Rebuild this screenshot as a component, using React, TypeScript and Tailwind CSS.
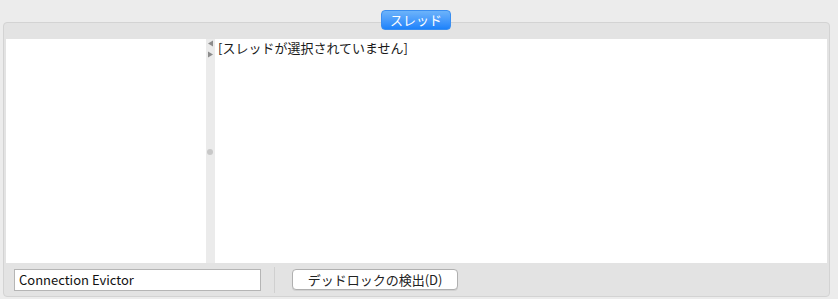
import React from "react";

export default function App() {
  const font = { fontFamily: '"Lucida Grande", "Noto Sans CJK JP", "Liberation Sans", sans-serif' };
  return (
    <div className="w-[838px] h-[299px] bg-[#ececec] relative overflow-hidden" style={font}>
      <div className="pt-[22px] pl-[3px] pr-[8px] h-full">
        <div className="h-[275px] w-[827px] bg-[#e3e3e3] border border-[#d3d3d3] rounded-[4px] flex flex-col">
          <div className="h-[16px]" />
          <div className="flex h-[224px] mx-[2px]">
            <div className="w-[200px] bg-white" />
            <div className="w-[9px] bg-[#ebebeb] flex flex-col items-center relative">
              <svg width="7" height="19" viewBox="0 0 7 19" className="mt-[1px]">
                <path d="M6 0.5 L1 3.5 L6 6.5 Z" fill="#8c8c8c" />
                <path d="M1 11.5 L6 14.5 L1 17.5 Z" fill="#8c8c8c" />
              </svg>
              <div className="absolute top-[110px] left-[1px] w-[6px] h-[6px] rounded-full bg-[#c8c8c8]" />
            </div>
            <div className="flex-1 bg-white pl-[3px] pt-[1px]">
              <div className="text-[13px] leading-[16px] text-[#1a1a1a]">[スレッドが選択されていません]</div>
            </div>
          </div>
          <div className="flex items-center h-[33px]">
            <div className="ml-[10px] w-[247px] h-[22px] bg-white border border-[#b5b5b5] flex items-center px-[4px] text-[13px] text-[#111]">
              Connection Evictor
            </div>
            <div className="ml-[13px] w-px h-[26px] bg-[#d0d0d0]" />
            <button className="ml-[17px] w-[166px] h-[21px] bg-white border border-[#b0b0b0] rounded-[4px] text-[13px] text-[#222] flex items-center justify-center shadow-[0_1px_0_rgba(0,0,0,0.08)]">
              デッドロックの検出(D)
            </button>
          </div>
        </div>
      </div>
      <div className="absolute left-[381px] top-[10px] w-[70px] h-[20px] rounded-[4px] bg-gradient-to-b from-[#6cb3fa] to-[#1a82fb] border border-[#3a8ef0] text-white text-[13px] flex items-center justify-center">
        スレッド
      </div>
    </div>
  );
}
